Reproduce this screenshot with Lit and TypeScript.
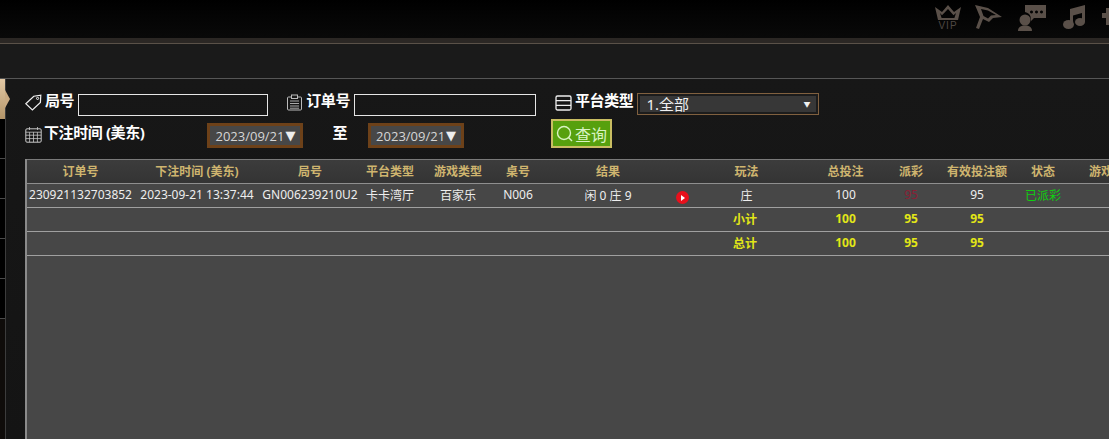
import { LitElement, html, css, svg } from "lit";
import { customElement } from "lit/decorators.js";

const COLS = [109, 124, 102, 58, 78, 42, 138, 11, 117, 81, 50, 82, 50, 66];
const HEAD = ["订单号", "下注时间 (美东)", "局号", "平台类型", "游戏类型", "桌号", "结果", "", "玩法", "总投注", "派彩", "有效投注额", "状态", "游戏"];

const tag = svg`<path d="M.8 9.800 8.800 2.200 15.800 1.200 15.400 8.400 7.400 16z" fill="none" stroke="#f0f0f0" stroke-width="1.200"/><circle cx="12.600" cy="4.400" r="1.100" fill="none" stroke="#f0f0f0"/>`;
const clip = svg`<rect x="1.500" y="3" width="14" height="13" rx="1" fill="none" stroke="#bbb"/><rect x="5.500" y="1" width="6" height="3.500" fill="#1a1a1a" stroke="#bbb"/><path d="M4 7h9M4 9.500h9M4 12h9M4 14.200h9" stroke="#bbb" stroke-width=".9"/>`;
const list = svg`<rect x="1" y="2" width="15" height="14" rx="1.500" fill="none" stroke="#eee" stroke-width="1.300"/><path d="M1 6.700h15M1 11.300h15" stroke="#eee" stroke-width="1.300"/>`;
const cal = svg`<rect x=".8" y="2.800" width="15.400" height="13.400" rx="1.200" fill="none" stroke="#c8c8c8"/><path d="M.8 6.200h15.400M.8 9.200h15.400M.8 12.600h15.400M4.600 6.200v10M8.500 6.200v10M12.400 6.200v10M4.500 1v3M12.500 1v3" stroke="#c8c8c8" stroke-width=".8"/>`;

@customElement("app-root")
export class AppRoot extends LitElement {
  static styles = css`
    :host { display: block; width: 1109px; height: 439px; overflow: hidden; background: #141414; color: #fff;
      font-family: "Noto Sans", "Noto Sans CJK SC", sans-serif; font-size: 12px; }
    .top { height: 38px; background: linear-gradient(#000, #090909); display: flex; align-items: flex-start; padding: 5px 0 0 935px; overflow: hidden; box-sizing: border-box; }
    .top svg { flex: none; fill: #5a5049; }
    .vip { display: flex; flex-direction: column; align-items: center; width: 26px; color: #4f4843; font: 10px/9px "Liberation Sans", sans-serif; letter-spacing: 1px; margin-right: 14px; }
    .m16 { margin-right: 16px; }
    .m17 { margin-right: 17px; }
    .band { height: 5px; background: #2b2724; border-bottom: 1px solid #5a5148; }
    .bar { height: 34px; background: #1a1a1a; border-bottom: 1px solid #565656; }
    .body { display: flex; height: 360px; }
    .side { width: 5px; flex: none; border-right: 1px solid #3c3c3c; background: #0f0c0a; position: relative; }
    .item { height: 39px; background: #000; border-bottom: 1px solid #4a4a4a; }
    .item.on { background: linear-gradient(#e3c9a5, #b39468); border: none; height: 40px; position: relative; }
    .item.on::after { content: ""; position: absolute; left: 5px; top: 11px; border-left: 5px solid #c9aa82; border-top: 9px solid transparent; border-bottom: 9px solid transparent; }
    .main { flex: 1; min-width: 0; padding-left: 19px; display: flex; flex-direction: column; background: linear-gradient(#171717, #141414); }
    .row { display: flex; align-items: center; color: #fff; font-weight: 700; font-size: 15px; letter-spacing: -.4px; }
    .r1 { margin-top: 14px; height: 23px; }
    .r2 { margin-top: 3px; height: 30px; }
    .ico { width: 17px; height: 17px; flex: none; margin-right: 3px; }
    .label { white-space: nowrap; line-height: 20px; }
    .up { margin-bottom: 9px; }
    .iup { margin-bottom: 4px; }
    .lift { margin-bottom: 4px; }
    input { box-sizing: border-box; height: 22px; background: transparent; border: 1px solid #e6e6e6; padding: 0; margin-left: 4px; }
    .i1 { width: 190px; margin-right: 18px; }
    .i2 { width: 182px; margin-right: 19px; }
    .select { box-sizing: border-box; width: 182px; height: 22px; margin-left: 4px; margin-bottom: 2px; border: 1px solid #80603f; background: #373737; padding: 0 8px; color: #f0f0f0; font-size: 15px; letter-spacing: 0; font-weight: 400; display: flex; justify-content: space-between; align-items: center; box-shadow: inset 0 0 0 2px #1c1c1c; }
    .caret { font-size: 7px; }
    .date { box-sizing: border-box; width: 96px; height: 25px; background: #474747; border: 3px solid #6d4119; color: #d6d6d6; font-size: 13px; letter-spacing: 0; font-weight: 400; display: flex; align-items: center; justify-content: center; white-space: nowrap; font-family: "Open Sans", sans-serif; margin-top: 3px; }
    .date b { font: 13px "DejaVu Sans", sans-serif; color: #eee; margin-left: 1px; }
    .d1 { margin-left: 63px; }
    .to { margin-left: 29px; margin-right: 21px; }
    .btn { box-sizing: border-box; width: 61px; height: 29px; margin-left: 87px; margin-top: -1px; background: #57a00e; border: 2px solid #c9bd62; color: #d9f3c2; font-size: 16px; letter-spacing: 0; font-weight: 400; display: flex; align-items: center; justify-content: center; gap: 2px; }
    .btn svg { width: 17px; height: 17px; }
    .panel { margin-top: 10px; flex: 1; background: #474747; border-left: 2px solid #8a8a8a; overflow: hidden; }
    table { border-collapse: separate; border-spacing: 0; table-layout: fixed; width: 1108px; margin-left: -1px; }
    th { height: 21px; padding: 0 0 2px; background: linear-gradient(#3c3c3c, #343434); border-top: 1px solid #7a7a7a; border-bottom: 1px solid #8f8f8f; color: #cfb56f; font-size: 12px; font-weight: 700; white-space: nowrap; overflow: visible; }
    td { height: 21px; padding: 0 0 2px; border-bottom: 1px solid #a0a0a0; text-align: center; color: #eee; white-space: nowrap; font-size: 12px; overflow: visible; }
    .sum td { color: #e2e617; font-weight: 700; }
    td.red { color: #8a1f35; }
    td.green { color: #0fd00f; }
    .play { display: inline-flex; width: 13px; height: 13px; background: #e8101c; border-radius: 50%; vertical-align: middle; align-items: center; justify-content: center; transform: translate(-1px, 2px); }
    .play::before { content: ""; border-left: 4px solid #fff; border-top: 3px solid transparent; border-bottom: 3px solid transparent; margin-left: 1px; }
  `;

  private sumRow(label: string) {
    return html`<tr class="sum"><td colspan="8"></td><td style="padding-right:3px">${label}</td><td>100</td><td>95</td><td>95</td><td></td><td></td></tr>`;
  }

  render() {
    return html`
      <div class="top">
        <div class="vip"><svg width="26" height="16" viewBox="0 0 26 16"><path fill-rule="evenodd" d="M0 2l7 5 6-7 6 7 7-5-3 13H3zM5 8l1.600 5h12.800L21 8l-2.500 2.300L13 4l-6 6.300z"/></svg>VIP</div>
        <svg class="m16" width="27" height="24" viewBox="0 0 27 24"><path fill-rule="evenodd" d="M0 0l13 3 14 9-9 1-4 4-6-3-4 10-3-1 4-11zM6 4l2.500 7 4.500 2.500 3-3 5-.5-8-4.500z"/></svg>
        <svg class="m17" width="28" height="26" viewBox="0 0 28 26"><path fill-rule="evenodd" d="M7 0h21v13H16l-3 3-.500-4.500C12 9 10 8 7 7zM13.500 5.500a1.500 1.500 0 1 0 .01 0zM18.500 5.500a1.500 1.500 0 1 0 .01 0zM23.500 5.500a1.500 1.500 0 1 0 .01 0z"/><circle cx="7" cy="15" r="5.500"/><path d="M0 26c0-4 3-5.500 7-5.500S14 22 14 26z"/></svg>
        <svg class="m17" width="22" height="24" viewBox="0 0 22 24"><path d="M7 4l15-4v17h-3V8l-9 2.500V20H7z"/><ellipse cx="5.500" cy="19.500" rx="5.500" ry="4.500"/><ellipse cx="17" cy="17" rx="5" ry="4"/></svg>
        <svg width="13" height="26" viewBox="0 0 13 26"><path d="M4 3h5v5h4v5H9v7H4v-7H0V8h4z"/></svg>
      </div>
      <div class="band"></div>
      <div class="bar"></div>
      <div class="body">
        <div class="side">
          <div class="item on"></div>
          ${[1, 2, 3, 4, 5].map(() => html`<div class="item"></div>`)}
        </div>
        <div class="main">
          <div class="row r1">
            <svg class="ico iup" viewBox="0 0 17 17">${tag}</svg><span class="label up">局号</span><input class="i1" />
            <svg class="ico iup" viewBox="0 0 17 17">${clip}</svg><span class="label up">订单号</span><input class="i2" />
            <svg class="ico iup" viewBox="0 0 17 17">${list}</svg><span class="label up">平台类型</span>
            <div class="select"><span>1.全部</span><span class="caret">▼</span></div>
          </div>
          <div class="row r2">
            <svg class="ico" style="margin-right:2px" viewBox="0 0 17 17">${cal}</svg><span class="label lift">下注时间 (美东)</span>
            <div class="date d1">2023/09/21<b>▼</b></div>
            <span class="label to lift">至</span>
            <div class="date">2023/09/21<b>▼</b></div>
            <div class="btn"><svg viewBox="0 0 17 17"><circle cx="8" cy="8" r="6.500" fill="none" stroke="#d9f3c2" stroke-width="1.400"/><path d="M12.500 12.500l3.500 3.500" stroke="#d9f3c2" stroke-width="1.400"/></svg>查询</div>
          </div>
          <div class="panel">
            <table>
              <colgroup>${COLS.map((w) => html`<col style="width:${w}px" />`)}</colgroup>
              <thead><tr>${HEAD.map((h) => html`<th>${h}</th>`)}</tr></thead>
              <tbody>
                <tr>
                  <td>230921132703852</td><td>2023-09-21 13:37:44</td><td>GN006239210U2</td><td>卡卡湾厅</td><td>百家乐</td><td>N006</td><td>闲 0 庄 9</td><td><span class="play"></span></td><td>庄</td><td>100</td><td class="red">95</td><td>95</td><td class="green">已派彩</td><td></td>
                </tr>
                ${this.sumRow("小计")}
                ${this.sumRow("总计")}
              </tbody>
            </table>
          </div>
        </div>
      </div>
    `;
  }
}
